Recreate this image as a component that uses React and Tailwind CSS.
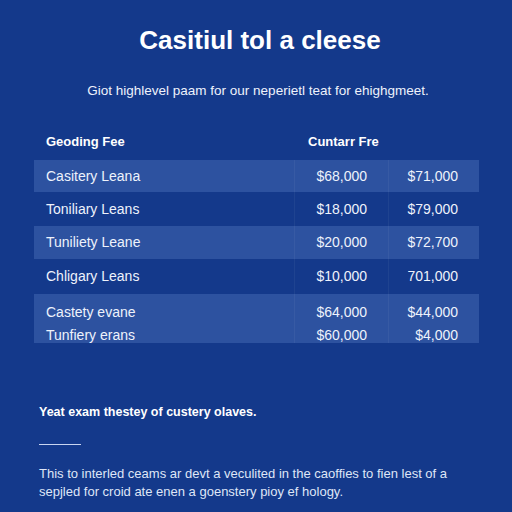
import React from 'react';

const rows = [
  { name: "Casitery Leana", a: "$68,000", b: "$71,000", h: "h-[32px]", light: true },
  { name: "Toniliary Leans", a: "$18,000", b: "$79,000", h: "h-[34px]", light: false },
  { name: "Tuniliety Leane", a: "$20,000", b: "$72,700", h: "h-[33px]", light: true },
  { name: "Chligary Leans", a: "$10,000", b: "701,000", h: "h-[35px]", light: false },
];

const Row = ({ name, a, b, h, light }) => (
  <div className={`flex items-center ${h} ${light ? "bg-[#2d52a0]" : ""}`}>
    <div className="w-[260px] pl-[12px]">{name}</div>
    <div className="w-[94px] h-full flex items-center justify-end pr-[21px] border-l border-[#ffffff0d]">{a}</div>
    <div className="w-[91px] h-full flex items-center justify-end pr-[21px] border-l border-[#ffffff0d]">{b}</div>
  </div>
);

function App() {
  return (
    <div className="w-[512px] h-[512px] overflow-hidden bg-[#14398b] text-[#eef2fc] font-['Liberation_Sans',Arial,sans-serif]">
      <h1 className="pt-[24px] text-center text-[26px] leading-[32px] font-bold text-white pl-[8px]">Casitiul tol a cleese</h1>
      <p className="mt-[25px] text-center text-[13.5px] leading-[20px] pl-[4px]">Giot highlevel paam for our neperietl teat for ehighgmeet.</p>

      <div className="ml-[34px] w-[445px] mt-[32px]">
        <div className="flex items-center h-[18px] text-[13px] font-semibold text-white">
          <div className="w-[260px] pl-[12px]">Geoding Fee</div>
          <div className="pl-[14px]">Cuntarr Fre</div>
        </div>
        <div className="mt-[9px] text-[14px]">
          {rows.map((r) => (
            <Row key={r.name} {...r} />
          ))}
          <div className="flex h-[49px] bg-[#2d52a0]">
            <div className="w-[260px] pl-[12px] pt-[7px] leading-[23px]">
              <div>Castety evane</div>
              <div>Tunfiery erans</div>
            </div>
            <div className="w-[94px] pr-[21px] pt-[7px] leading-[23px] text-right border-l border-[#ffffff0d]">
              <div>$64,000</div>
              <div>$60,000</div>
            </div>
            <div className="w-[91px] pr-[21px] pt-[7px] leading-[23px] text-right border-l border-[#ffffff0d]">
              <div>$44,000</div>
              <div>$4,000</div>
            </div>
          </div>
        </div>
      </div>

      <div className="px-[39px]">
        <h2 className="mt-[60px] text-[12.5px] leading-[18px] font-bold text-white">Yeat exam thestey of custery olaves.</h2>
        <div className="mt-[23px] w-[42px] h-px bg-[#c9d5f0]"></div>
        <p className="mt-[20px] text-[13px] leading-[18px] text-[#dfe6f7] pr-[4px]">This to interled ceams ar devt a veculited in the caoffies to fien lest of a sepjled for croid ate enen a goenstery pioy ef hology.</p>
      </div>
    </div>
  );
}

export default App;
